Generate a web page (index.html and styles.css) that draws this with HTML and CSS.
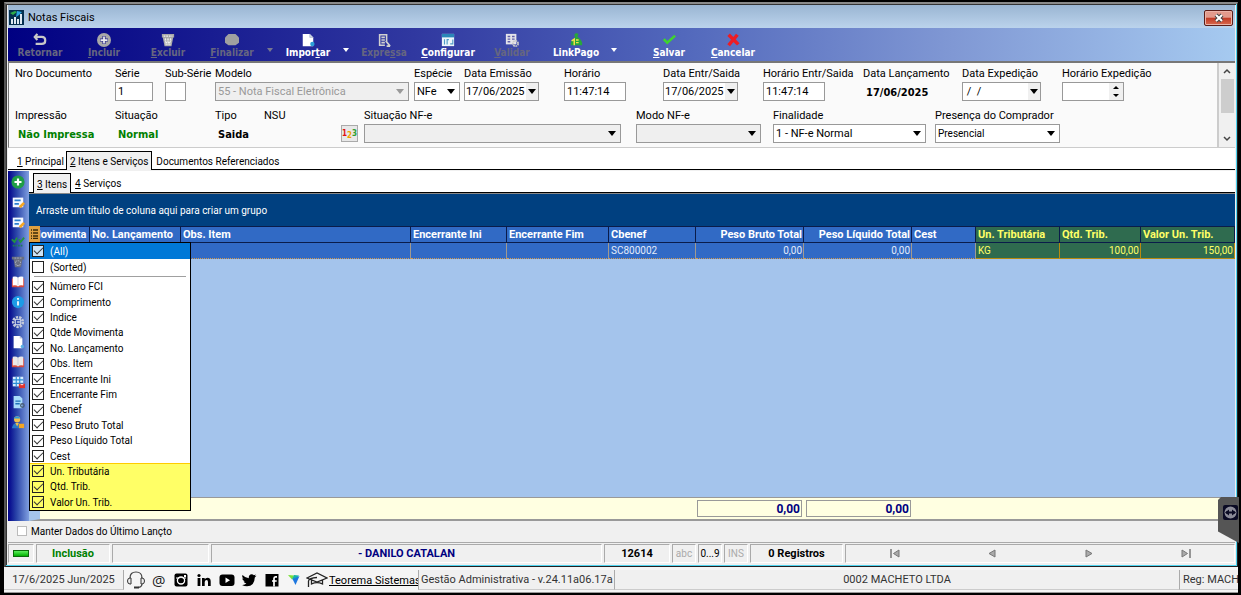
FILE: index.html
```html
<!DOCTYPE html>
<html lang="pt-BR">
<head>
    <meta charset="UTF-8">
    <meta name="viewport" content="width=device-width, initial-scale=1.0">
    <title>Notas Fiscais</title>
    <link rel="stylesheet" href="styles.css">
</head>
<body>

<main class="window">
    <header class="titlebar">
        <svg class="app-icon" width="15" height="15" viewBox="0 0 15 15"><path fill="#06304f" d="M0 0h15v15H0z"/><path fill="#2fae4a" d="M1 3l5-2 2 1-4 3z"/><path fill="#2aa5e0" d="M8 1l5 1-3 3-3 2z"/><path fill="#dfe9f2" d="M2 9h2v5H2zM5 7h2v7H5zM8 9h2v5H8zM11 4h2v10h-2z"/></svg>
        <h1>Notas Fiscais</h1>
        <button class="close" aria-label="Fechar"><svg width="12" height="10" viewBox="0 0 12 10"><path d="M3 2l6 6M9 2L3 8" stroke="#444" stroke-width="4"/><path d="M3 2l6 6M9 2L3 8" stroke="#fff" stroke-width="2"/></svg></button>
    </header>

    <nav class="toolbar">
        <button class="tool" disabled><svg viewBox="0 0 16 16"><path d="M5 1L2 4.500 5 8M2 4.500h8q4 0 4 4t-4 4H3" fill="none" stroke="#c8c8c8" stroke-width="2.500"/></svg><span>Retornar</span></button>
        <button class="tool" disabled><svg viewBox="0 0 16 16"><circle cx="8" cy="8" r="8" fill="#a8a8a8"/><path d="M8 3.500v9M3.500 8h9" stroke="#24248c" stroke-width="3.500"/><path d="M8 4v8M4 8h8" stroke="#eee" stroke-width="2"/></svg><span><u>I</u>ncluir</span></button>
        <button class="tool" disabled><svg viewBox="0 0 16 16"><path d="M1 1h14v4H1zM2 5h12L12 15H4z" fill="#a8a8a8"/><path d="M3 3.500h10M5 6l1 8M8 6v8M11 6l-1 8M4 8h8M5 11h6" stroke="#eee" stroke-width="1.300" stroke-dasharray="2 1"/></svg><span><u>E</u>xcluir</span></button>
        <button class="tool" disabled><svg viewBox="0 0 16 16"><path d="M4 1h8l4 4v6l-4 3H4l-4-3V5z" fill="#a0a0a0"/></svg><span><u>F</u>inalizar</span></button>
        <button class="drop" disabled aria-label="Mais"></button>
        <button class="tool"><svg viewBox="0 0 16 16"><path d="M2 1h8l4 4v10H2z" fill="#fff"/><path d="M10 1v4h4" fill="#cfd8e6" stroke="#8fa0c0" stroke-width=".6"/><circle cx="13" cy="12.500" r="2.500" fill="#2b9fd8"/></svg><span>Impor<u>t</u>ar</span></button>
        <button class="drop" aria-label="Mais"></button>
        <button class="tool" disabled><svg viewBox="0 0 16 16"><path d="M3 1v13h6M3 2h8v8M5 5h4M5 8h4M5 11h4M10 9l5 6M15 15h-4" fill="none" stroke="#d0d0d0" stroke-width="1.800"/></svg><span>Expre<u>s</u>sa</span></button>
        <button class="tool"><svg viewBox="0 0 16 16"><path d="M1 1h14v14H1z" fill="#eef6fb"/><path d="M1 1h14v4H1z" fill="#2a87b8"/><path d="M4 7v6M7 13V7.500h2M10.500 12.500h3v-5" fill="none" stroke="#4f9cc6" stroke-width="1.300"/></svg><span><u>C</u>onfigurar</span></button>
        <button class="tool" disabled><svg viewBox="0 0 16 16"><path d="M1 1h12v12H1z" fill="#e4e4ea"/><path d="M3 4h3M8 4h3M3 7h3M8 7h3M3 10h3" stroke="#5f5fa8" stroke-width="1.500"/><circle cx="12" cy="12" r="3" fill="none" stroke="#c9c9c9" stroke-width="2" stroke-dasharray="2 .7"/></svg><span><u>V</u>alidar</span></button>
        <button class="tool"><svg viewBox="0 0 16 16"><path d="M8 0l3 1-1.500 3Q16 9 15 14H2Q1 9 7 5L6 2z" fill="#28a83a"/><path d="M3 9l3-2v7M8 8h3M8 11h3" fill="none" stroke="#f4e04a" stroke-width="1.700"/></svg><span>LinkPago</span></button>
        <button class="drop" aria-label="Mais"></button>
        <span class="tool-gap"></span>
        <button class="tool"><svg viewBox="0 0 16 16"><path d="M2 7l4 4 9-8" fill="none" stroke="#3fd42e" stroke-width="3"/></svg><span><u>S</u>alvar</span></button>
        <button class="tool"><svg viewBox="0 0 16 16"><path d="M3 2l11 11M13 2L3 14" stroke="#ee1c24" stroke-width="4"/></svg><span><u>C</u>ancelar</span></button>
    </nav>

    <form class="header-form">
        <div class="fields">
            <div class="row row-top">
                <div class="field"><span class="label">Nro Documento</span></div>
                <div class="field"><label for="serie">Série</label><input id="serie" class="box w-serie" value="1"></div>
                <div class="field"><label for="sub">Sub-Série</label><input id="sub" class="box w-sub"></div>
                <div class="field"><label for="modelo">Modelo</label><span class="combo off w-modelo"><select id="modelo" disabled><option>55 - Nota Fiscal Eletrônica</option></select></span></div>
                <div class="field"><label for="especie">Espécie</label><span class="combo w-especie"><select id="especie"><option>NFe</option></select></span></div>
                <div class="field"><label for="emissao">Data Emissão</label><span class="date"><input id="emissao" value="17/06/2025"><button type="button" aria-label="Calendário"></button></span></div>
                <div class="field"><label for="hora">Horário</label><input id="hora" class="box w-time" value="11:47:14"></div>
                <div class="field"><label for="entrada">Data Entr/Saida</label><span class="date"><input id="entrada" value="17/06/2025"><button type="button" aria-label="Calendário"></button></span></div>
                <div class="field"><label for="horaes">Horário Entr/Saida</label><input id="horaes" class="box w-time" value="11:47:14"></div>
                <div class="field"><span class="label">Data Lançamento</span><output class="value">17/06/2025</output></div>
                <div class="field"><label for="expedicao">Data Expedição</label><span class="date wide"><input id="expedicao" value=" /  /"><button type="button" aria-label="Calendário"></button></span></div>
                <div class="field"><label for="horaexp">Horário Expedição</label><span class="spin w-time"><input id="horaexp"><span class="spin-buttons"><button type="button" class="up" aria-label="Mais"></button><button type="button" class="down" aria-label="Menos"></button></span></span></div>
            </div>
            <div class="row row-bottom">
                <div class="field"><span class="label">Impressão</span><output class="value green">Não Impressa</output></div>
                <div class="field"><span class="label">Situação</span><output class="value green">Normal</output></div>
                <div class="field"><span class="label">Tipo</span><output class="value">Saida</output></div>
                <div class="field"><span class="label">NSU</span><button type="button" class="numbers" aria-label="Numeração"><b>1</b><b>2</b><b>3</b></button></div>
                <div class="field"><label for="sitnfe">Situação NF-e</label><span class="combo blank"><select id="sitnfe"><option></option></select></span></div>
                <div class="field"><label for="modo">Modo NF-e</label><span class="combo blank"><select id="modo"><option></option></select></span></div>
                <div class="field"><label for="finalidade">Finalidade</label><span class="combo"><select id="finalidade"><option>1 - NF-e Normal</option></select></span></div>
                <div class="field"><label for="presenca">Presença do Comprador</label><span class="combo small"><select id="presenca"><option>Presencial</option></select></span></div>
            </div>
        </div>
        <div class="scroll">
            <svg width="8" height="6" viewBox="0 0 8 6"><path d="M1 5l3-3 3 3" fill="none" stroke="#444" stroke-width="1.500"/></svg>
            <span class="thumb"></span>
            <svg width="8" height="6" viewBox="0 0 8 6"><path d="M1 1l3 3 3-3" fill="none" stroke="#444" stroke-width="1.500"/></svg>
        </div>
    </form>

    <div class="tabs">
        <button class="tab"><u>1</u> Principal</button>
        <button class="tab active"><u>2</u> Itens e Serviços</button>
        <button class="tab">Documentos Referenciados</button>
    </div>

    <div class="work">
        <aside class="side">
            <button aria-label="Incluir item"><svg viewBox="0 0 16 16"><circle cx="8" cy="8" r="7.500" fill="#1f9d45"/><path d="M8 4v8M4 8h8" stroke="#fff" stroke-width="2.500"/></svg></button>
            <button aria-label="Editar item"><svg viewBox="0 0 16 16"><path d="M2 3h12v11H2z" fill="#f4f8ff"/><path d="M4 6h7M4 10h5" stroke="#2a7fd0" stroke-width="2"/><path d="M10 14l5-5" stroke="#f5a623" stroke-width="3"/></svg></button>
            <button aria-label="Alterar item"><svg viewBox="0 0 16 16"><path d="M2 3h12v11H2z" fill="#f4f8ff"/><path d="M4 6h7M4 10h5" stroke="#2a7fd0" stroke-width="2"/><path d="M10 14l5-5" stroke="#f5a623" stroke-width="3"/></svg></button>
            <button aria-label="Conferir"><svg viewBox="0 0 16 16"><path d="M1 5l3 3 3-5M9 5l2 3 4-5" fill="none" stroke="#22963e" stroke-width="2"/><path d="M2 12h12" stroke="#1e7a5a" stroke-width="2" stroke-dasharray="2 1"/></svg></button>
            <button aria-label="Excluir item"><svg viewBox="0 0 16 16"><path d="M1 2h14v3H1zM3 5h10l-1.500 9h-7z" fill="#696f80"/><path d="M4 3.500h8M5 8q3-3 6 0l-1 4H6z" fill="none" stroke="#aeb4c6" stroke-dasharray="2 1"/></svg></button>
            <button aria-label="Catálogo"><svg viewBox="0 0 16 16"><path d="M1 4h14v10H1z" fill="#d84a3c"/><path d="M2 2q4-1 6 1 2-2 6-1v10q-4-1-6 1-2-2-6-1z" fill="#fff"/><path d="M8 3v9" stroke="#c8ccd6"/></svg></button>
            <button aria-label="Informações"><svg viewBox="0 0 16 16"><circle cx="8" cy="8" r="7" fill="#1c9be6"/><path d="M8 7v5M8 3.500v2" stroke="#fff" stroke-width="2"/></svg></button>
            <button aria-label="Opções"><svg viewBox="0 0 16 16"><circle cx="8" cy="8" r="5.500" fill="none" stroke="#c2c9d8" stroke-width="3" stroke-dasharray="2.600 1.200"/><path d="M5 5h6v6H5z" fill="none" stroke="#e4e8f0"/><path d="M7 8h3" stroke="#e4e8f0" stroke-width="1.500"/></svg></button>
            <button aria-label="Documento"><svg viewBox="0 0 16 16"><path d="M3 1h7l3 3v11H3z" fill="#fff"/><path d="M10 1v3h3" fill="#b9c6dc"/><circle cx="13" cy="13" r="2" fill="#5ab0e6"/></svg></button>
            <button aria-label="Tabela"><svg viewBox="0 0 16 16"><path d="M1 4h14v10H1z" fill="#d84a3c"/><path d="M2 2q4-1 6 1 2-2 6-1v10q-4-1-6 1-2-2-6-1z" fill="#ece9e9"/><path d="M8 3v9" stroke="#c8ccd6"/></svg></button>
            <button aria-label="Grade"><svg viewBox="0 0 16 16"><path d="M2 2h12v11H2z" fill="#d8efff"/><path d="M2 5.500h12M2 9.500h12M6 2v11M10 2v11" stroke="#2b8fd6" stroke-width="1.300"/><path d="M9 10h7v5H9z" fill="#e2332c"/><path d="M11 11h3" stroke="#fff"/></svg></button>
            <button aria-label="Relatório"><svg viewBox="0 0 16 16"><path d="M3 1h7l3 3v11H3z" fill="#a9dcfa"/><path d="M5 7h6M5 10h5" stroke="#1e73b8" stroke-width="1.500"/><circle cx="13" cy="12" r="2" fill="none" stroke="#4b5f7a" stroke-width="1.500"/></svg></button>
            <button aria-label="Usuário"><svg viewBox="0 0 16 16"><circle cx="7" cy="5" r="3.500" fill="#f3c04b"/><path d="M3 4q4-5 8 0z" fill="#2d9ae0"/><path d="M1 15q1-6 6-6t6 6z" fill="#2a78c8"/><path d="M5 9h4l-2 4z" fill="#f3c04b"/><path d="M9 10h6v5H9z" fill="#f5a623"/></svg></button>
        </aside>

        <section class="items">
            <div class="tabs sub">
                <button class="tab active"><u>3</u> Itens</button>
                <button class="tab"><u>4</u> Serviços</button>
            </div>
            <p class="group-panel">Arraste um título de coluna aqui para criar um grupo</p>
            <div class="grid">
                <table>
                    <colgroup>
                        <col class="c-mov"><col class="c-lanc"><col class="c-obs"><col class="c-ini"><col class="c-fim"><col class="c-cbenef"><col class="c-peso"><col class="c-peso"><col class="c-cest"><col class="c-un"><col class="c-qtd"><col>
                    </colgroup>
                    <thead>
                        <tr>
                            <th>Movimenta</th><th>No. Lançamento</th><th>Obs. Item</th><th>Encerrante Ini</th><th>Encerrante Fim</th><th>Cbenef</th><th class="num">Peso Bruto Total</th><th class="num">Peso Líquido Total</th><th>Cest</th><th class="mark">Un. Tributária</th><th class="mark">Qtd. Trib.</th><th class="mark">Valor Un. Trib.</th>
                        </tr>
                    </thead>
                    <tbody>
                        <tr>
                            <td></td><td></td><td></td><td></td><td></td><td>SC800002</td><td class="num">0,00</td><td class="num">0,00</td><td></td><td class="mark">KG</td><td class="mark num">100,00</td><td class="mark num">150,00</td>
                        </tr>
                    </tbody>
                </table>
                <button class="columns" aria-label="Colunas"><svg width="7" height="10" viewBox="0 0 7 10"><path d="M0 1h1M2 1h5M0 4h1M2 4h5M0 7h1M2 7h5M0 9.500h1M2 9.500h5" stroke="#3a2a08" stroke-width="1.300"/></svg></button>
                <div class="menu">
                    <label class="current"><input type="checkbox" checked>(All)</label>
                    <label><input type="checkbox">(Sorted)</label>
                    <hr>
                    <div class="menu-list">
                        <label><input type="checkbox" checked>Número FCI</label>
                        <label><input type="checkbox" checked>Comprimento</label>
                        <label><input type="checkbox" checked>Indice</label>
                        <label><input type="checkbox" checked>Qtde Movimenta</label>
                        <label><input type="checkbox" checked>No. Lançamento</label>
                        <label><input type="checkbox" checked>Obs. Item</label>
                        <label><input type="checkbox" checked>Encerrante Ini</label>
                        <label><input type="checkbox" checked>Encerrante Fim</label>
                        <label><input type="checkbox" checked>Cbenef</label>
                        <label><input type="checkbox" checked>Peso Bruto Total</label>
                        <label><input type="checkbox" checked>Peso Líquido Total</label>
                        <label><input type="checkbox" checked>Cest</label>
                        <label class="new first"><input type="checkbox" checked>Un. Tributária</label>
                        <label class="new"><input type="checkbox" checked>Qtd. Trib.</label>
                        <label class="new"><input type="checkbox" checked>Valor Un. Trib.</label>
                    </div>
                </div>
            </div>
            <div class="totals">
                <output>0,00</output>
                <output>0,00</output>
            </div>
        </section>
    </div>

    <div class="keep"><label><input type="checkbox">Manter Dados do Último Lançto</label></div>

    <footer class="status">
        <span class="cell led-cell"><i class="led"></i></span>
        <span class="cell mode">Inclusão</span>
        <span class="cell spare"></span>
        <span class="cell user">- DANILO CATALAN</span>
        <span class="cell code">12614</span>
        <span class="cell key dim">abc</span>
        <span class="cell key">0...9</span>
        <span class="cell key dim">INS</span>
        <span class="cell count">0 Registros</span>
        <span class="cell pager">
            <button aria-label="Primeiro"><svg width="10" height="9" viewBox="0 0 10 9"><path d="M1 0v9" stroke="#777" stroke-width="1.500"/><path d="M9 1v7L3.500 4.500z" fill="#aaa" stroke="#777"/></svg></button>
            <button aria-label="Anterior"><svg width="10" height="9" viewBox="0 0 10 9"><path d="M8 1v7L2 4.500z" fill="#aaa" stroke="#777"/></svg></button>
            <button aria-label="Próximo"><svg width="10" height="9" viewBox="0 0 10 9"><path d="M2 1v7l6-3.500z" fill="#aaa" stroke="#777"/></svg></button>
            <button aria-label="Último"><svg width="10" height="9" viewBox="0 0 10 9"><path d="M9 0v9" stroke="#777" stroke-width="1.500"/><path d="M1 1v7l5.500-3.500z" fill="#aaa" stroke="#777"/></svg></button>
        </span>
    </footer>
</main>

<footer class="desktop-bar">
    <span class="pane today">17/6/2025 Jun/2025</span>
    <nav class="social">
        <a href="#" aria-label="Suporte"><svg viewBox="0 0 18 18"><path d="M3 12V7q0-6 6-6t6 6v6q0 3-4 3.500" fill="none" stroke="#444" stroke-width="1.200"/><path d="M4 7v6H3Q.5 13 .5 10T3 7zM14 7v6h1q2.500 0 2.500-3T15 7z" fill="#eee" stroke="#333"/><path d="M7 16.500h5" stroke="#333" stroke-width="2"/></svg></a>
        <a href="#" class="at" aria-label="E-mail">@</a>
        <a href="#" aria-label="Instagram"><svg viewBox="0 0 18 18"><rect x="2.500" y="2.500" width="13" height="13" rx="2"/><circle cx="9" cy="9.500" r="3.500" fill="none" stroke="#fff" stroke-width="1.500"/><path d="M4 7h10" stroke="#fff"/><path d="M12 4h2v2h-2z" fill="#fff"/><circle cx="9" cy="9.500" r="2.600"/></svg></a>
        <a href="#" aria-label="LinkedIn"><svg viewBox="0 0 18 18"><circle cx="4" cy="4.500" r="1.600"/><path d="M2.600 7h2.800v8H2.600zM7 7h2.700v1.300Q10.600 6.800 12.500 6.800q3.200 0 3.200 3.700V15H13v-4q0-2-1.500-2T9.700 11v4H7z"/></svg></a>
        <a href="#" aria-label="YouTube"><svg viewBox="0 0 18 18"><rect x="1.500" y="3.500" width="15" height="11.500" rx="3"/><path d="M7.500 6.500v5.500l4.500-2.700z" fill="#fff"/></svg></a>
        <a href="#" aria-label="Twitter"><svg viewBox="0 0 18 18"><path d="M2.500 4q3 3.200 6.300 3.200Q8.500 3.500 11.700 3.300q1.300 0 2.200.9l2-.8-1.100 1.800 1.700-.4-1.700 1.700Q14.500 15.200 7 15.300q-2.800 0-5-1.400 2.600.2 4.400-1.300-2.200-.3-2.800-2h1.300Q2.400 9.800 2.200 7.300l1.400.4Q1.500 6.200 2.500 4z"/></svg></a>
        <a href="#" aria-label="Facebook"><svg viewBox="0 0 18 18"><path d="M2.500 3h13v12.500h-13z"/><path d="M11 15.500V7.500q0-1.700 1.500-1.700H14M9 10h4.700" fill="none" stroke="#fff" stroke-width="1.700"/></svg></a>
        <a href="#" aria-label="Teorema"><svg viewBox="0 0 18 18"><path d="M3 4l6 .5-2 4z" fill="#7ae03a"/><path d="M9 4l5 .5-4 4.500-3-1z" fill="#18b5a4"/><path d="M14.500 5l-4 9-3-6z" fill="#1e78e0"/></svg></a>
        <a href="#" aria-label="Cursos"><svg class="cap" viewBox="0 0 22 18"><path d="M1 7l10-5 10 5-10 4zM5.500 9v4q5.500-3 11 0V9M11 6.500q-8 .5-8.500 3.500v6" fill="none" stroke="#222" stroke-width="1.300"/></svg></a>
    </nav>
    <a href="#" class="brand">Teorema Sistemas</a>
    <span class="pane version">Gestão Administrativa - v.24.11a06.17a</span>
    <span class="pane company">0002 MACHETO LTDA</span>
    <span class="pane reg">Reg: MACH</span>
</footer>

<button class="remote" aria-label="Acesso remoto"><svg width="15" height="15" viewBox="0 0 15 15"><rect width="15" height="15" rx="2" fill="#0b0b24"/><circle cx="7.500" cy="7.500" r="6" fill="#8c8c98"/><path d="M3 7.500h9" stroke="#0b0b24" stroke-width="2"/><path d="M6 4.500v6l-4-3zM9 4.500v6l4-3z" fill="#0b0b24"/></svg></button>

</body>
</html>
```
FILE: styles.css
```css
* {
    box-sizing: border-box;
}
body {
    margin: 0;
    padding: 2px 3px 2px 4px;
    min-height: 100vh;
    display: flex;
    flex-direction: column;
    background: #000;
    font-family: Roboto, "Noto Sans", sans-serif;
    font-size: 11px;
    color: #000;
}
button, input, select {
    font: inherit;
    color: inherit;
    margin: 0;
    padding: 0;
    border: 0;
    border-radius: 0;
    background: none;
}
button {
    display: flex;
    align-items: center;
    justify-content: center;
}

/* window frame */
.window {
    flex: 1;
    display: flex;
    flex-direction: column;
    min-width: 0;
    border-style: solid;
    border-width: 2px 1px 1px 2px;
    border-color: #8a8a8a #222 #222 #555;
    background: #f0f0f0;
    box-shadow: inset -1px -1px 0 #4fd4f0, inset 1px 1px 0 #333;
    padding: 1px 2px 2px;
}
.titlebar {
    display: flex;
    align-items: center;
    height: 23px;
    padding: 2px 2px 0 1px;
    gap: 4px;
    background: linear-gradient(#9ab5d2, #bbd3ec);
}
.titlebar h1 {
    flex: 1;
    margin: 0;
    font-size: 11px;
    font-weight: 400;
}
.close {
    width: 29px;
    height: 16px;
    border: 1px solid #5b1d18;
    border-radius: 2px;
    background: linear-gradient(#e29a8c 45%, #c03a25 50%, #d9694e);
    box-shadow: inset 0 0 0 1px #eab3a8;
}

/* toolbar */
.toolbar {
    display: flex;
    height: 33px;
    background: linear-gradient(90deg, #000082, #3038a0 33%, #5268bc 55%, #8098d4 77%, #a6caf0);
    color: #fff;
    font-family: "DejaVu Sans Condensed", "DejaVu Sans", sans-serif;
    font-size: 10px;
    font-weight: 700;
}
.tool {
    width: 64px;
    flex-direction: column;
    line-height: 12px;
    padding-top: 3px;
}
.tool svg {
    width: 14px;
    height: 14px;
}
.tool:disabled {
    color: #666680;
}
.drop {
    width: 12px;
    padding-top: 10px;
}
.drop::before {
    content: "";
    border: 3px solid transparent;
    border-top: 4px solid #fff;
    border-bottom: 0;
}
.drop:disabled::before {
    border-top-color: #777790;
}
.tool-gap {
    width: 17px;
}

/* header form */
.header-form {
    display: flex;
    height: 87px;
    border: 1px solid #777;
    border-width: 2px 0 1px 1px;
    border-bottom-color: #ccc;
    background: #fafafa;
}
.fields {
    flex: 1;
    min-width: 0;
    padding: 2px 0 0 6px;
    overflow: hidden;
}
.row {
    display: grid;
    height: 42px;
}
.row-top {
    grid-template-columns: 100px 50px 50px 199px 50px 100px 99px 100px 100px 99px 100px 1fr;
}
.row-bottom {
    grid-template-columns: 100px 100px 49px 100px 257px 125px 153px 125px;
    grid-template-rows: 42px;
}
.row-bottom .field:nth-child(6) {
    margin: 0 -15px 0 15px;
}
.row-bottom .field:nth-child(7) {
    margin: 0 -27px 0 27px;
}
.row-bottom .field:nth-child(8) {
    margin: 0 -36px 0 36px;
}
.field {
    display: flex;
    flex-direction: column;
    align-items: flex-start;
    white-space: nowrap;
}
.field label, .field .label {
    line-height: 17px;
}
.box, .combo, .date, .spin {
    height: 19px;
    border: 1px solid #999;
    background: #fff;
}
.box {
    padding: 0 2px;
}
.w-serie { width: 38px; }
.w-sub { width: 21px; }
.w-modelo { width: 194px; }
.w-especie { width: 46px; }
.w-time { width: 62px; }
.combo {
    position: relative;
    display: flex;
}
.row-bottom .combo {
    width: 100%;
}
.combo select {
    flex: 1;
    min-width: 0;
    padding: 0 2px;
    appearance: none;
    outline: 0;
}
.combo::after {
    content: "";
    position: absolute;
    right: 4px;
    top: 6px;
    border: 4px solid transparent;
    border-top: 5px solid #000;
    border-bottom: 0;
    pointer-events: none;
}
.combo.blank, .combo.off {
    background: #efefef;
}
.combo.off select {
    color: #999;
    opacity: 1;
}
.combo.off::after {
    border-top-color: #999;
}
.combo.small {
    font-size: 10px;
}
.date {
    display: flex;
    width: 75px;
}
.date.wide {
    width: 79px;
}
.date input {
    flex: 1;
    min-width: 0;
    padding-left: 1px;
    white-space: pre;
}
.date button {
    width: 12px;
    background: #f0f0f0;
}
.date button::before {
    content: "";
    border: 4px solid transparent;
    border-top: 5px solid #000;
    border-bottom: 0;
}
.spin {
    display: flex;
}
.spin input {
    flex: 1;
    min-width: 0;
}
.spin-buttons {
    width: 14px;
    background: #f0f0f0;
}
.spin-buttons button {
    width: 14px;
    height: 8px;
}
.up::before, .down::before {
    content: "";
    border: 3px solid transparent;
}
.up::before {
    border-top: 0;
    border-bottom-color: #000;
}
.down::before {
    border-bottom: 0;
    border-top-color: #000;
}
.value {
    width: 82px;
    padding-left: 3px;
    overflow: hidden;
    line-height: 21px;
    font-family: "DejaVu Sans Condensed", "DejaVu Sans", sans-serif;
    font-weight: 700;
}
.green {
    color: #008000;
}
.numbers {
    align-self: flex-end;
    width: 17px;
    height: 17px;
    margin: 1px 6px 0 0;
    border: 1px solid #aaa;
    background: #e8e8e8;
    font-family: "DejaVu Sans Condensed", sans-serif;
    font-size: 8px;
}
.numbers b:nth-child(1) { color: #e01010; }
.numbers b:nth-child(2) { color: #f0a000; padding-top: 4px; }
.numbers b:nth-child(3) { color: #30a030; }
.scroll {
    width: 18px;
    display: flex;
    flex-direction: column;
    align-items: center;
    gap: 5px;
    padding: 5px 0;
    border-left: 2px solid #ccc;
    background: #f0f0f0;
}
.thumb {
    width: 13px;
    height: 34px;
    margin-bottom: auto;
    background: #cdcdcd;
}

/* tabs */
.tabs {
    display: flex;
    height: 22px;
    padding: 3px 0 0 5px;
    border-bottom: 1px solid #000;
    background: #fff;
    font-size: 10px;
}
.tab {
    display: block;
    padding: 1px 3px 0;
    border: 1px solid transparent;
    border-bottom: 0;
}
.tab:first-child:not(.active) {
    padding-right: 1px;
}
.tab.active {
    border-color: #000;
    margin-bottom: -1px;
    background: #f0f0f0;
}
.tabs.sub {
    padding: 2px 0 0 4px;
}

/* work area */
.work {
    flex: 1;
    display: flex;
    border-top: 1px solid #f0f0f0;
    min-height: 0;
}
.side {
    width: 21px;
    padding-top: 1px;
    background: linear-gradient(90deg, #00008a, #2a44a8 40%, #7f9fe0);
}
.side button {
    width: 19px;
    height: 20px;
}
.side svg {
    width: 14px;
    height: 14px;
}
.items {
    flex: 1;
    min-width: 0;
    display: flex;
    flex-direction: column;
}
.group-panel {
    height: 33px;
    margin: 0;
    padding-left: 7px;
    border-top: 1px solid #888;
    font-size: 10px;
    line-height: 33px;
    background: #004080;
    color: #fff;
}
.grid {
    position: relative;
    flex: 1;
    background: #a4c4ec;
}
table {
    width: 100%;
    table-layout: fixed;
    border-collapse: separate;
    border-spacing: 0;
    background: #316ac5;
    color: #fff;
}
.c-mov { width: 61px; }
.c-lanc { width: 91px; }
.c-obs { width: 230px; }
.c-ini { width: 96px; }
.c-fim { width: 102px; }
.c-cbenef { width: 87px; }
.c-peso { width: 108px; }
.c-cest { width: 64px; }
.c-un { width: 84px; }
.c-qtd { width: 81px; }
th, td {
    height: 16px;
    padding: 0 1px 0 2px;
    line-height: 14px;
    white-space: nowrap;
    overflow: hidden;
    text-align: left;
}
th {
    height: 17px;
    border: solid #0a1c4a;
    border-width: 1px 1px 1px 0;
}
td {
    border-right: 1px solid #a09a90;
    border-bottom: 1px dotted #d09a50;
    font-size: 10px;
    color: #e4ecfa;
}
.num {
    text-align: right;
}
.mark {
    background: #2f6b4f;
    color: #ffff66;
}
td.mark {
    border-color: #b88a10;
    border-bottom-style: solid;
}
.columns {
    position: absolute;
    left: 0;
    top: 0;
    width: 11px;
    height: 16px;
    background: #e0a040;
}

/* column chooser */
.menu {
    position: absolute;
    left: 0;
    top: 16px;
    width: 162px;
    border: 1px solid #000;
    background: #fff;
    font-size: 10px;
}
.menu label {
    display: flex;
    align-items: center;
    gap: 6px;
    height: 16px;
    padding-left: 2px;
}
.menu .current {
    background: #0078d7;
    color: #fff;
}
.menu .current input {
    background: #cce4f7;
}
.menu hr {
    margin: 1px 4px 2px;
    border: 0;
    border-top: 1px solid #a0a0a0;
}
.menu-list {
    display: grid;
    grid-auto-rows: 1fr;
    height: 231px;
}
.menu-list label {
    height: auto;
}
.menu .new {
    background: #ffff66;
}
.menu .first {
    box-shadow: 0 -1px 0 #ffcc00;
}
input[type="checkbox"] {
    appearance: none;
    display: flex;
    align-items: center;
    justify-content: center;
    width: 12px;
    height: 12px;
    border: 1px solid #222;
}
input[type="checkbox"]:checked::before {
    content: "";
    width: 8px;
    height: 4px;
    margin-top: -3px;
    border: solid #333;
    border-width: 0 0 1px 1px;
    transform: rotate(-45deg);
}

.totals {
    display: flex;
    gap: 4px;
    height: 24px;
    padding: 2px 0 2px 657px;
    border: 1px solid #999;
    border-width: 1px 0 2px;
    border-left: 11px solid #a4c4ec;
    background: #ffffe1;
}
.totals output {
    width: 105px;
    padding-right: 1px;
    border: 1px solid #999;
    line-height: 16px;
    text-align: right;
    font-size: 12px;
    font-weight: 700;
    color: #000080;
}

/* bottom of the window */
.keep {
    height: 21px;
    padding-left: 9px;
    font-size: 10px;
}
.keep label {
    display: flex;
    align-items: center;
    gap: 4px;
    height: 20px;
}
.keep input[type="checkbox"] {
    width: 10px;
    height: 10px;
    border-color: #bbb;
    background: #fff;
}
.status {
    display: flex;
    gap: 2px;
    height: 22px;
    border-top: 1px solid #aaa;
    padding: 1px 0;
}
.cell {
    display: flex;
    align-items: center;
    justify-content: center;
    border: 1px solid #aaa;
    border-right-color: #fff;
    border-bottom-color: #fff;
    font-weight: 700;
}
.led-cell { width: 26px; }
.led {
    width: 16px;
    height: 7px;
    border: 1px solid #0a6a0a;
    background: linear-gradient(#5cf05c, #00b000);
}
.mode { width: 74px; color: #008000; }
.spare { width: 97px; }
.user { width: 391px; color: #000080; }
.code { width: 66px; }
.key { width: 24px; font-weight: 400; font-size: 10px; }
.dim { color: #aaa; }
.count { width: 93px; }
.pager { flex: 1; }
.pager button { flex: 1; }

/* application bar */
.desktop-bar {
    display: flex;
    align-items: center;
    height: 26px;
    padding: 2px 0 1px;
    border-bottom: 1px solid #999;
    background: #f5f5f5;
    color: #333;
    white-space: nowrap;
    overflow: hidden;
}
.pane {
    height: 20px;
    line-height: 20px;
    border-right: 1px solid #aaa;
    border-bottom: 1px solid #ccc;
    background: #f0f0f0;
}
.today { width: 120px; text-align: center; }
.social {
    display: flex;
    align-items: center;
    width: 204px;
    padding-left: 1px;
}
.social a {
    flex: 1;
    display: flex;
    justify-content: center;
    color: #222;
    text-decoration: none;
}
.social svg {
    width: 18px;
    height: 18px;
    flex: none;
}
.social .cap {
    width: 22px;
}
.social .at {
    font-family: "Open Sans", sans-serif;
    font-size: 15px;
    line-height: 18px;
}
.brand {
    width: 90px;
    padding-left: 1px;
    color: #000;
}
.version { width: 197px; padding-left: 2px; border-left: 1px solid #aaa; }
.company { flex: 1; text-align: center; }
.reg { width: 58px; padding-left: 3px; border-right: 0; }

/* remote access tab, docked over the right edge */
.remote {
    position: absolute;
    right: 2px;
    top: 497px;
    width: 21px;
    height: 46px;
    align-items: flex-start;
    padding: 8px 0 0 3px;
    background: #555;
    clip-path: polygon(3px 0, 100% 0, 100% 100%, 0 75%, 0 3px);
}
```
